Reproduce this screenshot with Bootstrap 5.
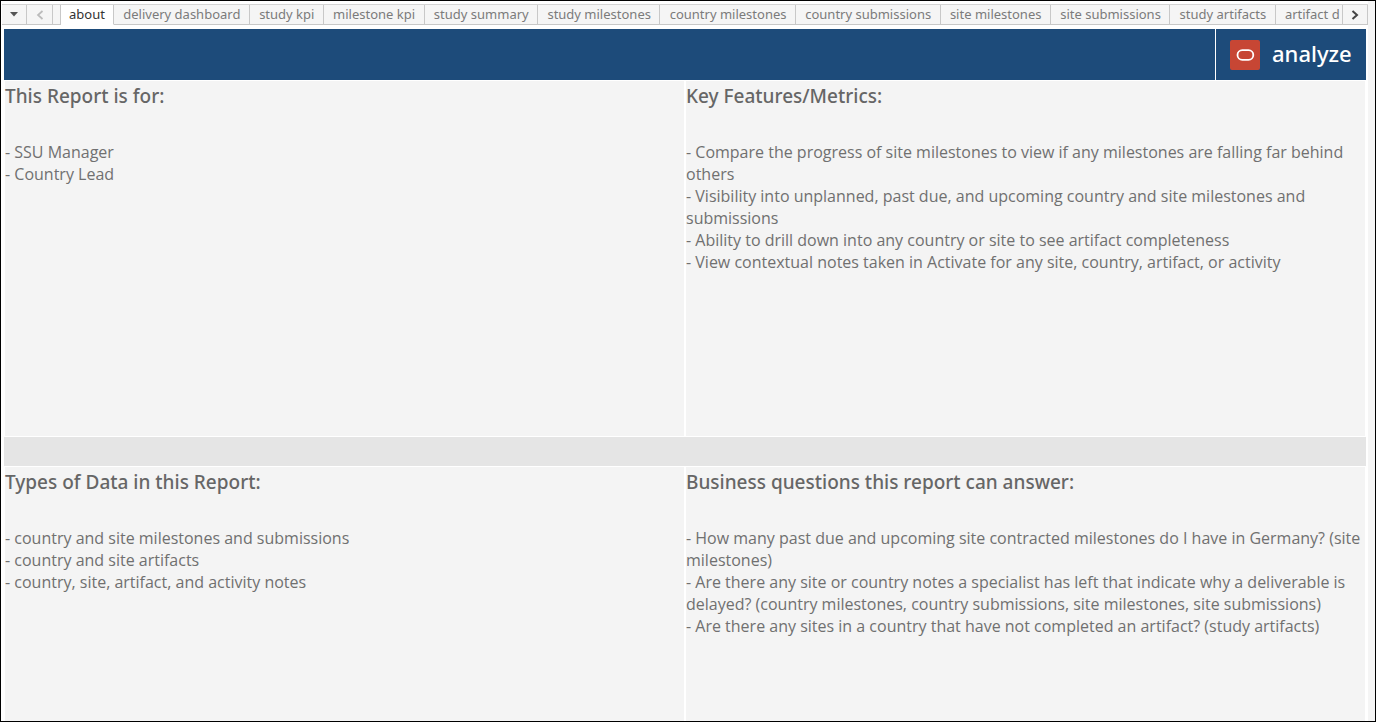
<!DOCTYPE html>
<html lang="en">
<head>
<meta charset="utf-8">
<meta name="viewport" content="width=device-width, initial-scale=1">
<title>analyze - about</title>
<link href="https://cdn.jsdelivr.net/npm/bootstrap@5.3.0/dist/css/bootstrap.min.css" rel="stylesheet">
<style>
  body { font-family: "Noto Sans", "Open Sans", sans-serif; color: #666; background: #f5f5f5; }
  .frame { border: 1px solid #000; padding-right: 7px; }
  .workbook { background: #fff; padding-top: 3px; }

  /* sheet tabs */
  .sheet-bar { height: 21px; background: #f5f5f5; border-top: 1px solid #d4d4d4; margin-left: 1px; }
  .sheet-bar button { background: #f5f5f5; border: 0 solid #c8c8c8; border-bottom-width: 1px; border-right-width: 1px; border-radius: 0; padding: 0; }
  .sheet-menu { width: 25px; }
  .sheet-prev { width: 26px; }
  .sheet-next { width: 25px; }
  .sheet-gap { width: 8px; border-right: 1px solid #c8c8c8; border-bottom: 1px solid #c8c8c8; }
  .sheet-bar .sheet-tab { font-size: 13px; line-height: 16px; color: #7b7b7b; padding: 0 8px 2px 9px; white-space: nowrap; flex: 1 0 auto; }
  .sheet-bar .sheet-tab.active { flex-grow: 0; background: #fff; color: #333; border-bottom-color: #fff; padding: 0 8px 2px; }
  .sheet-bar .sheet-tab:last-child { padding-right: 2px; border-right: 0; }
  .sheet-tabs { border-right: 1px solid #c8c8c8; }

  /* dashboard */
  .dashboard { padding: 4px 2px 0 3px; }
  .banner { height: 51px; background: #1d4b7a; margin-bottom: 1px; }
  .brand-box { width: 151px; border-left: 1px solid #fff; padding-left: 14px; color: #fff; }
  .brand-name { font-size: 22px; font-weight: 500; line-height: 30px; padding-bottom: 4px; }
  .panels { display: grid; grid-template-columns: 1fr 1fr; column-gap: 2px; padding: 0 1px; }
  .panels-top { min-height: 355px; }
  .panel { background: #f4f4f4; }
  .panel h2 { font-size: 19px; font-weight: 500; line-height: 30px; margin-bottom: 30px; color: #666; }
  .panel li { font-family: "Open Sans", sans-serif; font-size: 16px; line-height: 22px; color: #707070; }
  .divider { height: 29px; background: #e5e5e5; margin: 1px 0; }
</style>
</head>
<body>
<div class="frame min-vh-100 d-flex flex-column">
  <div class="workbook d-flex flex-column flex-fill">
    <nav class="sheet-bar d-flex" aria-label="Sheets">
      <button type="button" class="sheet-menu d-flex align-items-center justify-content-center" aria-label="All sheets">
        <svg width="8" height="5" viewBox="0 0 8 5"><path d="M0 0h8L4 4.500z" fill="#555"/></svg>
      </button>
      <button type="button" class="sheet-prev d-flex align-items-center justify-content-center" aria-label="Previous">
        <svg width="8" height="10" viewBox="0 0 8 10"><path d="M6.500 1L2 5l4.500 4" fill="none" stroke="#bbb" stroke-width="1.700"/></svg>
      </button>
      <div class="sheet-gap"></div>
      <div class="sheet-tabs d-flex flex-fill overflow-hidden">
        <button type="button" class="sheet-tab active" aria-current="page">about</button>
        <button type="button" class="sheet-tab">delivery dashboard</button>
        <button type="button" class="sheet-tab">study kpi</button>
        <button type="button" class="sheet-tab">milestone kpi</button>
        <button type="button" class="sheet-tab">study summary</button>
        <button type="button" class="sheet-tab">study milestones</button>
        <button type="button" class="sheet-tab">country milestones</button>
        <button type="button" class="sheet-tab">country submissions</button>
        <button type="button" class="sheet-tab">site milestones</button>
        <button type="button" class="sheet-tab">site submissions</button>
        <button type="button" class="sheet-tab">study artifacts</button>
        <button type="button" class="sheet-tab">artifact d</button>
      </div>
      <button type="button" class="sheet-next d-flex align-items-center justify-content-center flex-shrink-0" aria-label="Next">
        <svg width="8" height="10" viewBox="0 0 8 10"><path d="M1.500 1L6 5 1.500 9" fill="none" stroke="#444" stroke-width="2"/></svg>
      </button>
    </nav>

    <main class="dashboard d-flex flex-column flex-fill">
      <header class="banner d-flex justify-content-end">
        <div class="brand-box d-flex align-items-center">
          <svg width="30" height="30" viewBox="0 0 30 30" aria-hidden="true"><rect width="30" height="30" rx="2" fill="#c74634"/><rect x="7.500" y="10.200" width="15.800" height="9.600" rx="4.800" fill="none" stroke="#fff" stroke-width="1.800"/></svg>
          <span class="brand-name ms-2 ps-1">analyze</span>
        </div>
      </header>

      <div class="panels panels-top">
        <section class="panel">
          <h2>This Report is for:</h2>
          <ul class="list-unstyled mb-0">
            <li>- SSU Manager</li>
            <li>- Country Lead</li>
          </ul>
        </section>
        <section class="panel">
          <h2>Key Features/Metrics:</h2>
          <ul class="list-unstyled mb-0">
            <li>- Compare the progress of site milestones to view if any milestones are falling far behind others</li>
            <li>- Visibility into unplanned, past due, and upcoming country and site milestones and submissions</li>
            <li>- Ability to drill down into any country or site to see artifact completeness</li>
            <li>- View contextual notes taken in Activate for any site, country, artifact, or activity</li>
          </ul>
        </section>
      </div>

      <div class="divider"></div>

      <div class="panels flex-fill">
        <section class="panel">
          <h2>Types of Data in this Report:</h2>
          <ul class="list-unstyled mb-0">
            <li>- country and site milestones and submissions</li>
            <li>- country and site artifacts</li>
            <li>- country, site, artifact, and activity notes</li>
          </ul>
        </section>
        <section class="panel">
          <h2>Business questions this report can answer:</h2>
          <ul class="list-unstyled mb-0">
            <li>- How many past due and upcoming site contracted milestones do I have in Germany? (site milestones)</li>
            <li>- Are there any site or country notes a specialist has left that indicate why a deliverable is delayed? (country milestones, country submissions, site milestones, site submissions)</li>
            <li>- Are there any sites in a country that have not completed an artifact? (study artifacts)</li>
          </ul>
        </section>
      </div>
    </main>
  </div>
</div>
<script src="https://cdn.jsdelivr.net/npm/bootstrap@5.3.0/dist/js/bootstrap.bundle.min.js"></script>
</body>
</html>
